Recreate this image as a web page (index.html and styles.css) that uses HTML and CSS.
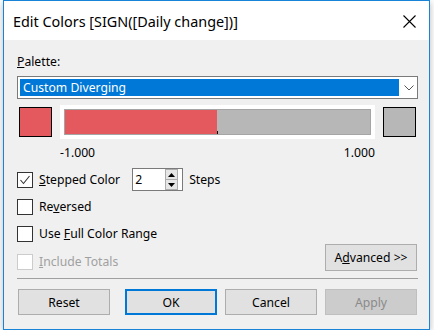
FILE: index.html
```html
<!DOCTYPE html>
<html lang="en">
<head>
<meta charset="UTF-8">
<title>Edit Colors</title>
<link rel="stylesheet" href="styles.css">
</head>
<body>
<div class="window">
  <div class="titlebar">
    <span class="title">Edit Colors [SIGN([Daily change])]</span>
    <svg class="close" width="13" height="13" viewBox="0 0 13 13"><path d="M0.5 0.5 L12.5 12.5 M12.5 0.5 L0.5 12.5" stroke="#000" stroke-width="1.1" fill="none"/></svg>
  </div>

  <div class="content">
    <div class="label"><u>P</u>alette:</div>

    <div class="combo">
      <span class="combo-value">Custom Diverging</span>
      <svg class="combo-arrow" width="10" height="6" viewBox="0 0 10 6"><polyline points="0.5,0.5 5,5 9.5,0.5" stroke="#555" fill="none"/></svg>
    </div>

    <div class="ramp-row">
      <div class="swatch swatch-red"></div>
      <div class="ramp">
        <div class="ramp-bar"><span class="tick"></span></div>
      </div>
      <div class="swatch swatch-gray"></div>
    </div>

    <div class="range">
      <span>-1.000</span>
      <span>1.000</span>
    </div>

    <div class="step-row">
      <span class="check">
        <svg width="14" height="14" viewBox="0 0 14 14"><polyline points="2.5,7 5.5,10.5 11.5,3" stroke="#333" stroke-width="1.1" fill="none"/></svg>
      </span>
      <span class="opt-text"><u>S</u>tepped Color</span>
      <div class="spin">
        <span class="spin-value">2</span>
        <div class="spin-btns">
          <span class="spin-btn"><svg width="7" height="4" viewBox="0 0 7 4"><polygon points="3.5,0 7,4 0,4" fill="#000"/></svg></span>
          <span class="spin-btn"><svg width="7" height="4" viewBox="0 0 7 4"><polygon points="0,0 7,0 3.5,4" fill="#000"/></svg></span>
        </div>
      </div>
      <span class="steps">Steps</span>
    </div>

    <div class="opt-row first">
      <span class="check"></span>
      <span class="opt-text">Re<u>v</u>ersed</span>
    </div>

    <div class="opt-row">
      <span class="check"></span>
      <span class="opt-text">Use <u>F</u>ull Color Range</span>
    </div>

    <div class="last-row">
      <div class="opt-row disabled">
        <span class="check"></span>
        <span class="opt-text"><u>I</u>nclude Totals</span>
      </div>
      <button class="btn btn-adv">A<u>d</u>vanced &gt;&gt;</button>
    </div>

    <div class="sep"></div>

    <div class="buttons">
      <button class="btn btn-reset">Reset</button>
      <button class="btn btn-ok">OK</button>
      <button class="btn">Cancel</button>
      <button class="btn btn-apply" disabled>Apply</button>
    </div>
  </div>
</div>
</body>
</html>
```

FILE: styles.css
```css
body {
  margin: 0;
  background: #fff;
  font-family: "Segoe UI", "Noto Sans", sans-serif;
  font-size: 12.2px;
  color: #000;
}

.window {
  width: 427px;
  height: 330px;
  margin-left: 3px;
  box-sizing: border-box;
  border: 1px solid #1883d7;
  display: flex;
  flex-direction: column;
  box-shadow: 0 2px 7px rgba(0, 0, 0, 0.28);
}

.titlebar {
  height: 39px;
  background: #fff;
  display: flex;
  align-items: center;
  justify-content: space-between;
  padding: 1px 13px 0 9px;
  box-sizing: border-box;
}
.title {
  font-size: 14.4px;
}

.content {
  flex: 1;
  background: #f0f0f0;
  padding: 0 11px 0 13px;
  display: flex;
  flex-direction: column;
}

u {
  text-decoration: underline;
  text-underline-offset: 1px;
}

.label {
  margin-top: 14px;
  line-height: 16px;
}

/* palette dropdown */
.combo {
  margin-top: 6px;
  height: 23px;
  box-sizing: border-box;
  border: 1px solid #7a7a7a;
  background: #fff;
  padding: 2px 0 2px 2px;
  display: flex;
  align-items: center;
}
.combo-value {
  width: 379px;
  height: 17px;
  line-height: 17px;
  background: #0078d7;
  color: #fff;
  padding-left: 3px;
  box-sizing: border-box;
}
.combo-arrow {
  margin-left: 5px;
}

/* colour ramp */
.ramp-row {
  margin-top: 6px;
  height: 34px;
  display: flex;
  align-items: center;
  gap: 8px;
  padding: 0 2px;
}
.swatch {
  width: 33px;
  height: 30px;
  box-sizing: border-box;
  border: 1px solid #000;
}
.swatch-red {
  background: #e3595e;
}
.swatch-gray {
  background: #b7b7b7;
}
.ramp {
  width: 315px;
  height: 34px;
  box-sizing: border-box;
  background: #fff;
  padding: 4px;
}
.ramp-bar {
  position: relative;
  height: 26px;
  box-sizing: border-box;
  border: 1px solid #a5a5a5;
  background: linear-gradient(to right, #e3595e 0, #e3595e 152px, #b7b7b7 152px);
}
.tick {
  position: absolute;
  left: 152px;
  bottom: 0;
  width: 1px;
  height: 3px;
  background: #000;
}

.range {
  margin-top: 6px;
  line-height: 16px;
  display: flex;
  justify-content: space-between;
  padding: 0 43px;
}

/* options */
.step-row {
  margin-top: 7px;
  height: 23px;
  display: flex;
  align-items: center;
}
.check {
  width: 16px;
  height: 16px;
  box-sizing: border-box;
  border: 1px solid #333;
  background: #fff;
  display: flex;
  align-items: center;
  justify-content: center;
  flex-shrink: 0;
}
.opt-text {
  margin-left: 6px;
  line-height: 16px;
}
.spin {
  margin-left: 12px;
  width: 51px;
  height: 23px;
  box-sizing: border-box;
  border: 1px solid #7a7a7a;
  background: #fff;
  display: flex;
  align-items: center;
  justify-content: space-between;
  padding: 0 4px 0 2px;
}
.spin-btns {
  display: flex;
  flex-direction: column;
  border: 1px solid #adadad;
}
.spin-btn {
  width: 11px;
  height: 9px;
  background: #e6e6e6;
  display: flex;
  align-items: center;
  justify-content: center;
}
.spin-btn + .spin-btn {
  border-top: 1px solid #adadad;
}
.steps {
  margin-left: 6px;
}

.opt-row {
  margin-top: 11px;
  height: 16px;
  display: flex;
  align-items: center;
}
.opt-row.first {
  margin-top: 8px;
}
.disabled {
  color: #a0a0a0;
}
.disabled .check {
  border-color: #cccccc;
}

.last-row {
  margin-top: 2px;
  display: flex;
  justify-content: space-between;
  align-items: flex-end;
}
.last-row .opt-row {
  margin: 0 0 1px;
}

/* buttons */
.btn {
  width: 92px;
  height: 26px;
  box-sizing: border-box;
  border: 1px solid #adadad;
  background: #e1e1e1;
  font-family: inherit;
  font-size: 12.2px;
  color: #000;
  padding: 0;
}
.btn-adv {
  height: 27px;
  margin-right: 1px;
}
.btn-ok {
  border: 2px solid #0078d7;
}
.btn-apply {
  background: #cccccc;
  border-color: #bfbfbf;
  color: #8a8a8a;
}

.sep {
  margin-top: 7px;
  height: 1px;
  background: #a0a0a0;
}

.buttons {
  margin-top: 10px;
  display: flex;
  gap: 8px;
  padding: 0 1px;
}
.btn-reset {
  margin-right: 7px;
}
```
